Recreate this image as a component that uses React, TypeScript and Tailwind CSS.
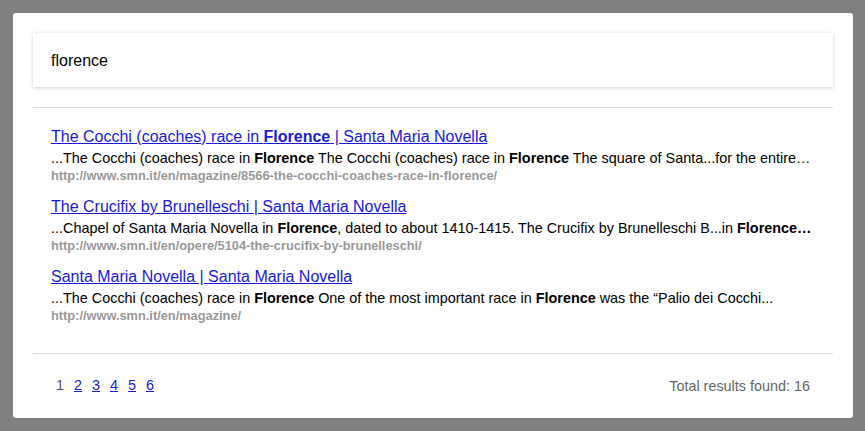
import React from 'react';

const results = [
  {
    title: ['The Cocchi (coaches) race in ', 'Florence', ' | Santa Maria Novella'],
    snippet: (
      <>
        ...The Cocchi (coaches) race in <b>Florence</b> The Cocchi (coaches) race in <b>Florence</b> The square of Santa...for the entire…
      </>
    ),
    url: 'http://www.smn.it/en/magazine/8566-the-cocchi-coaches-race-in-florence/',
  },
  {
    title: ['The Crucifix by Brunelleschi | Santa Maria Novella'],
    snippet: (
      <>
        ...Chapel of Santa Maria Novella in <b>Florence</b>, dated to about 1410-1415. The Crucifix by Brunelleschi B...in <b>Florence…</b>
      </>
    ),
    url: 'http://www.smn.it/en/opere/5104-the-crucifix-by-brunelleschi/',
  },
  {
    title: ['Santa Maria Novella | Santa Maria Novella'],
    snippet: (
      <>
        ...The Cocchi (coaches) race in <b>Florence</b> One of the most important race in <b>Florence</b> was the “Palio dei Cocchi...
      </>
    ),
    url: 'http://www.smn.it/en/magazine/',
  },
];

const App = () => {
  return (
    <div className="w-[865px] h-[431px] bg-[#808080] p-[13px] pr-[12px] pb-[13px] font-['Liberation_Sans',Arial,sans-serif]">
      <div className="bg-white rounded-[3px] h-full px-5 pt-5">
        {/* search box */}
        <div className="h-[54px] flex items-center pl-[18px] pt-[1px] bg-white shadow-[0_1px_4px_rgba(0,0,0,0.18)] text-[16px] text-black">
          florence
        </div>

        <div className="mt-5 border-t border-[#dddddd]" />

        {/* results */}
        <div className="pt-[19px] px-[18px] h-[245px]">
          {results.map((r, i) => (
            <div key={i} className="mb-[14px]">
              <a href="#" className="block leading-5 text-[16px] text-[#1a1ad8] underline">
                {r.title.length === 3 ? (
                  <>
                    {r.title[0]}<b>{r.title[1]}</b>{r.title[2]}
                  </>
                ) : (
                  r.title[0]
                )}
              </a>
              <div className="leading-[22px] text-[14.4px] text-black whitespace-nowrap">
                {r.snippet}
              </div>
              <div className="leading-[14px] text-[12.8px] font-bold text-[#999999]">{r.url}</div>
            </div>
          ))}
        </div>

        <div className="border-t border-[#dddddd]" />

        {/* pagination */}
        <div className="flex items-center justify-between pl-[23px] pr-[23px] pt-[20px] text-[14.4px]">
          <div className="flex gap-[10px]">
            <span className="text-[#555555]">1</span>
            {[2, 3, 4, 5, 6].map((n) => (
              <a key={n} href="#" className="text-[#1a1ad8] underline">
                {n}
              </a>
            ))}
          </div>
          <span className="text-[#666666] mt-[2px]">Total results found: 16</span>
        </div>
      </div>
    </div>
  );
};

export default App;
